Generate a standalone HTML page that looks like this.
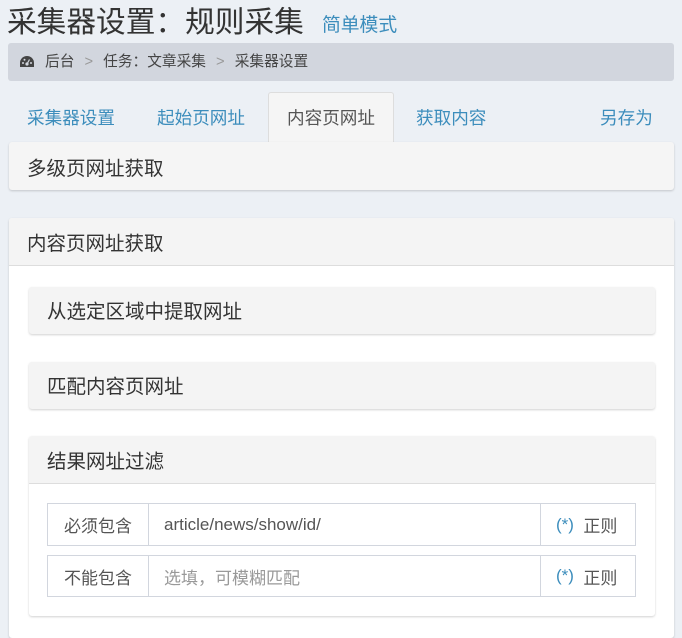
<!DOCTYPE html>
<html><head><meta charset="utf-8"><style>
*{box-sizing:border-box;margin:0;padding:0}
body{width:682px;height:628px;overflow:hidden;background:#ecf0f5;font-family:"Liberation Sans","Noto Sans CJK SC",sans-serif;color:#333;position:relative}
.a{position:absolute}
.blue{color:#3c8dbc}
.box{position:absolute;background:#f4f4f4;border-radius:3px;box-shadow:0 1px 2px rgba(0,0,0,.18)}
.t18{font-size:19.5px;position:absolute;white-space:nowrap;line-height:22px}
.cell{position:absolute;border:1px solid #d2d6de;background:#fff;font-size:17px;display:flex;align-items:center}
.tab{position:absolute;top:106px;font-size:17.6px;line-height:24px;white-space:nowrap}
</style></head><body>
<div class="a" style="left:7px;top:3px;font-size:29.7px;line-height:40px;color:#333;white-space:nowrap">采集器设置：规则采集</div>
<div class="a blue" style="left:322px;top:11px;font-size:18.8px;line-height:28px">简单模式</div>
<div class="a" style="left:8px;top:43px;width:666px;height:38px;background:#d2d6de;border-radius:3px"></div>
<svg class="a" style="left:19px;top:55px" width="16" height="14" viewBox="0 0 16 14"><path d="M8 1A7 7 0 0 0 1 8v4h14V8A7 7 0 0 0 8 1z" fill="#444"/><circle cx="8" cy="9" r="1.6" fill="#d2d6de"/><path d="M8 9L10.5 4.5" stroke="#d2d6de" stroke-width="1.2"/><circle cx="4" cy="8" r="1" fill="#d2d6de"/><circle cx="12" cy="8" r="1" fill="#d2d6de"/><circle cx="5.5" cy="4.8" r="1" fill="#d2d6de"/></svg>
<div class="a" style="left:45px;top:52px;font-size:14.7px;line-height:20px;color:#444;white-space:nowrap">后台 <span style="color:#999;margin:0 6px">&gt;</span> 任务：文章采集 <span style="color:#999;margin:0 6px">&gt;</span> 采集器设置</div>
<div class="a" style="left:268px;top:92px;width:126px;height:52px;background:#f5f5f5;border:1px solid #ddd;border-bottom:none;border-radius:3px 3px 0 0"></div>
<div class="tab blue" style="left:27px">采集器设置</div>
<div class="tab blue" style="left:157px">起始页网址</div>
<div class="tab" style="left:287px;color:#555">内容页网址</div>
<div class="tab blue" style="left:416px">获取内容</div>
<div class="tab blue" style="left:600px">另存为</div>
<div class="box" style="left:9px;top:142px;width:665px;height:48px;background:#f5f5f5"><span class="t18" style="left:18px;top:16px">多级页网址获取</span></div>
<div class="box" style="left:9px;top:218px;width:665px;height:420px;background:#fff">
<div class="a" style="left:0;top:0;width:665px;height:48px;background:#f4f4f4;border-bottom:1px solid #ddd;border-radius:3px 3px 0 0"><span class="t18" style="left:18px;top:15px">内容页网址获取</span></div>
</div>
<div class="box" style="left:29px;top:287px;width:626px;height:47px"><span class="t18" style="left:18px;top:14px">从选定区域中提取网址</span></div>
<div class="box" style="left:29px;top:362px;width:626px;height:47px"><span class="t18" style="left:18px;top:14px">匹配内容页网址</span></div>
<div class="box" style="left:29px;top:436px;width:626px;height:180px;background:#fff">
<div class="a" style="left:0;top:0;width:626px;height:48px;background:#f4f4f4;border-bottom:1px solid #ddd;border-radius:3px 3px 0 0"><span class="t18" style="left:18px;top:15px">结果网址过滤</span></div>
</div>
<div class="cell" style="left:47px;top:503px;width:102px;height:43px;justify-content:center;color:#555">必须包含</div>
<div class="cell" style="left:148px;top:503px;width:393px;height:43px;padding-left:15px;color:#555">article/news/show/id/</div>
<div class="cell" style="left:540px;top:503px;width:96px;height:43px;padding-left:15px;color:#555"><span class="blue">(*)</span>&nbsp;&nbsp;正则</div>
<div class="cell" style="left:47px;top:555px;width:102px;height:42px;justify-content:center;color:#555">不能包含</div>
<div class="cell" style="left:148px;top:555px;width:393px;height:42px;padding-left:15px;color:#999">选填，可模糊匹配</div>
<div class="cell" style="left:540px;top:555px;width:96px;height:42px;padding-left:15px;color:#555"><span class="blue">(*)</span>&nbsp;&nbsp;正则</div>
</body></html>
